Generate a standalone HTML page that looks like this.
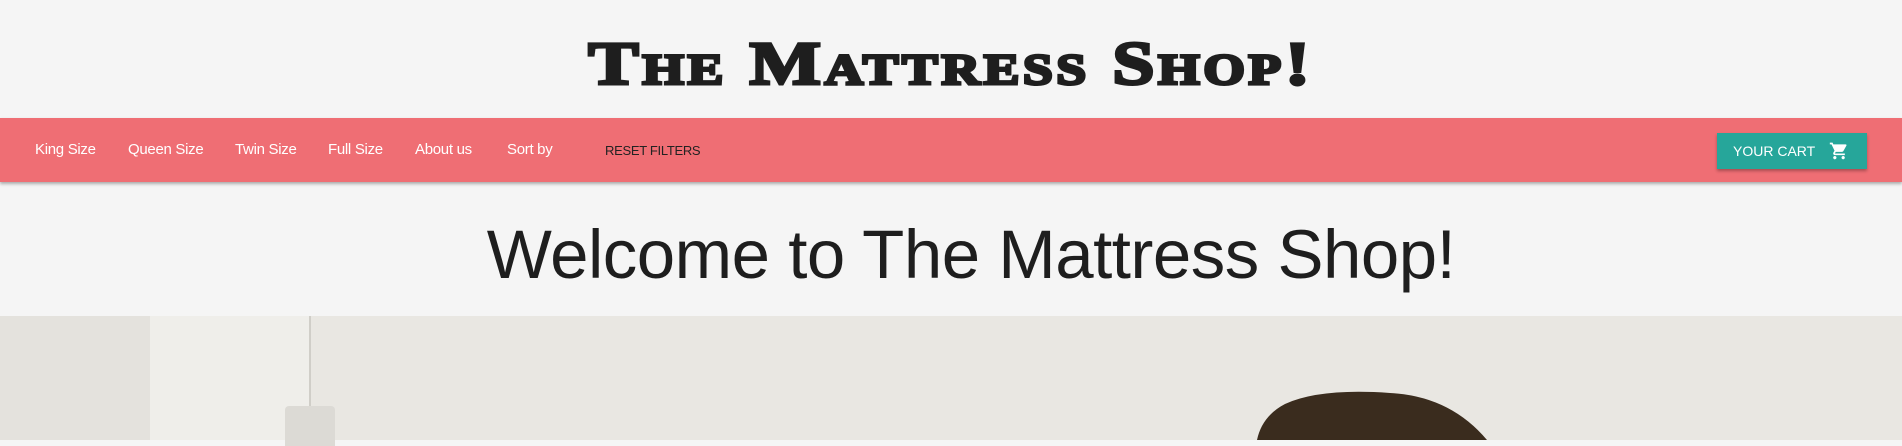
<!DOCTYPE html>
<html><head><style>
body{margin:0;width:1902px;height:440px;overflow:hidden;background:#f5f5f5;font-family:"Liberation Sans",sans-serif;position:relative}
.title{position:absolute;left:0;width:1902px;top:30px;text-align:center;font-family:"Liberation Serif",serif;font-weight:bold;font-size:61px;font-variant:small-caps;color:#1e1e1e;letter-spacing:3px;-webkit-text-stroke:3px #1e1e1e;transform:scaleX(1.24)}
.nav{position:absolute;left:0;top:118px;width:1902px;height:64px;background:#ef6e74;box-shadow:0 2px 3px rgba(0,0,0,.3)}
.nav a{position:absolute;top:23px;color:#fff;font-size:15px;white-space:nowrap;letter-spacing:-0.3px}
.reset{color:#222!important;font-size:13px!important;text-transform:uppercase}
.cart{position:absolute;left:1717px;top:15px;width:150px;height:36px;background:#26a69a;box-shadow:0 2px 3px rgba(0,0,0,.3);color:#fff;font-size:14px}
.welcome{position:absolute;left:20px;width:1902px;top:215px;text-align:center;font-size:69px;font-weight:300;color:#1e1e1e;letter-spacing:-0.5px}
.img{position:absolute;left:0;top:316px;width:1902px;height:124px;background:#e9e7e2}
</style></head><body>
<div class="title">The Mattress Shop!</div>
<div class="nav">
<a style="left:35px">King Size</a>
<a style="left:128px">Queen Size</a>
<a style="left:235px">Twin Size</a>
<a style="left:328px">Full Size</a>
<a style="left:415px">About us</a>
<a style="left:507px">Sort by</a>
<a class="reset" style="left:605px;top:25px">Reset Filters</a>
<div class="cart"><span style="position:absolute;left:16px;top:10px">YOUR CART</span>
<svg style="position:absolute;left:111px;top:8px" width="22" height="20" viewBox="0 0 24 24"><path fill="#fff" d="M7 18c-1.1 0-2 .9-2 2s.9 2 2 2 2-.9 2-2-.9-2-2-2zM1 2v2h2l3.6 7.6-1.35 2.4C5.1 14.3 5 14.6 5 15c0 1.1.9 2 2 2h12v-2H7.4c-.1 0-.25-.1-.25-.25l.03-.12.9-1.63h7.45c.75 0 1.4-.4 1.75-1l3.6-6.5A1 1 0 0 0 20 4H5.2l-.9-2H1zm16 16c-1.1 0-2 .9-2 2s.9 2 2 2 2-.9 2-2-.9-2-2-2z"/></svg></div>
</div>
<div class="welcome">Welcome to The Mattress Shop!</div>
<div class="img">
<div style="position:absolute;left:0;top:0;width:150px;height:124px;background:#e4e2dd"></div>
<div style="position:absolute;left:150px;top:0;width:160px;height:124px;background:#efeeea"></div>
<div style="position:absolute;left:309px;top:0;width:2px;height:90px;background:#d0cec8"></div>
<div style="position:absolute;left:285px;top:90px;width:50px;height:40px;background:#dcdad5;border-radius:4px 4px 0 0"></div>
<svg style="position:absolute;left:0;top:0" width="1902" height="124"><path d="M1257 124 Q1262 100 1285 88 Q1320 72 1390 77 Q1450 80 1487 124 Z" fill="#3a2c1e"/></svg>
</div>
</body></html>
